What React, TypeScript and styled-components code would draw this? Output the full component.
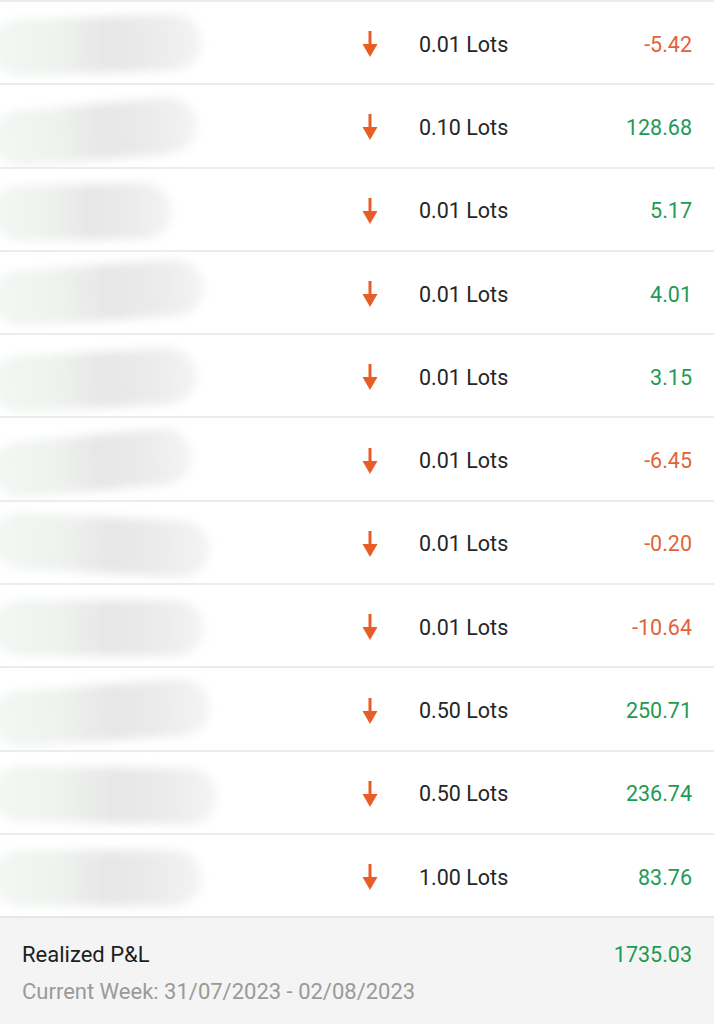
import styled, { createGlobalStyle } from "styled-components";

const GlobalStyle = createGlobalStyle`
    html, body {
        margin: 0;
        padding: 0;
        background: #ffffff;
        font-family: Roboto, "Noto Sans", sans-serif;
    }
`;

const Page = styled.div`
    width: 714px;
    height: 1024px;
    overflow: hidden;
    display: flex;
    flex-direction: column;
`;

const Row = styled.div`
    box-sizing: border-box;
    height: 83.3px;
    border-top: 2px solid #ececec;
    padding-top: 3px;
    display: grid;
    grid-template-columns: 355px 30px 1fr auto;
    align-items: center;
    padding-right: 22px;
    overflow: hidden;
`;

const Hidden = styled.div`
    position: relative;
    height: 100%;
`;

const Smudge = styled.div<{ $w: number; $tilt: number; $y: number }>`
    position: absolute;
    left: -8px;
    top: ${(p) => p.$y}px;
    width: ${(p) => p.$w}px;
    height: 56px;
    border-radius: 30px;
    background: linear-gradient(90deg, #f3f8f4 0%, #eff3ef 30%, #e6e6e6 55%, #ececec 80%, #f4f4f4 100%);
    transform: rotate(${(p) => p.$tilt}deg);
    filter: blur(5px);
`;

const ArrowCell = styled.div`
    display: flex;
    justify-content: center;
    align-items: center;
`;

const Lots = styled.div`
    margin-left: 34px;
    font-size: 21.5px;
    color: #262626;
`;

const Value = styled.div<{ $neg: boolean }>`
    font-size: 21.5px;
    color: ${(p) => (p.$neg ? "#e2643a" : "#1f9a55")};
    text-align: right;
`;

const Footer = styled.div`
    flex: 1;
    border-top: 2px solid #e6e6e6;
    background: #f4f4f4;
    padding: 24px 22px 0 22px;
`;

const FooterLine = styled.div`
    display: flex;
    justify-content: space-between;
    align-items: center;
`;

const Label = styled.div`
    font-size: 22px;
    color: #1e1e1e;
`;

const Total = styled.div`
    font-size: 21.5px;
    color: #1f9a55;
`;

const Week = styled.div`
    margin-top: 12px;
    font-size: 22px;
    color: #9a9a9a;
`;

function DownArrow() {
    return (
        <svg width="18" height="28" viewBox="0 0 18 28">
            <rect x="7.5" y="1" width="3" height="15" fill="#e85d26" />
            <polygon points="1.5,14 16.5,14 9,27" fill="#e85d26" />
        </svg>
    );
}

const trades = [
    { lots: "0.01", pl: "-5.42", w: 210, tilt: -2, y: 12 },
    { lots: "0.10", pl: "128.68", w: 205, tilt: -5, y: 16 },
    { lots: "0.01", pl: "5.17", w: 180, tilt: -1, y: 12 },
    { lots: "0.01", pl: "4.01", w: 212, tilt: -4, y: 10 },
    { lots: "0.01", pl: "3.15", w: 205, tilt: -3, y: 14 },
    { lots: "0.01", pl: "-6.45", w: 200, tilt: -5, y: 14 },
    { lots: "0.01", pl: "-0.20", w: 218, tilt: 3, y: 12 },
    { lots: "0.01", pl: "-10.64", w: 212, tilt: 0, y: 12 },
    { lots: "0.50", pl: "250.71", w: 218, tilt: -4, y: 14 },
    { lots: "0.50", pl: "236.74", w: 225, tilt: 1, y: 12 },
    { lots: "1.00", pl: "83.76", w: 210, tilt: 0, y: 12 },
];

function App() {
    return <Page>
        <GlobalStyle />
        {trades.map((t, i) => (
            <Row key={i}>
                <Hidden>
                    <Smudge $w={t.w} $tilt={t.tilt} $y={t.y} />
                </Hidden>
                <ArrowCell><DownArrow /></ArrowCell>
                <Lots>{t.lots} Lots</Lots>
                <Value $neg={t.pl.startsWith("-")}>{t.pl}</Value>
            </Row>
        ))}
        <Footer>
            <FooterLine>
                <Label>Realized P&amp;L</Label>
                <Total>1735.03</Total>
            </FooterLine>
            <Week>Current Week: 31/07/2023 - 02/08/2023</Week>
        </Footer>
    </Page>
}

export default App;
